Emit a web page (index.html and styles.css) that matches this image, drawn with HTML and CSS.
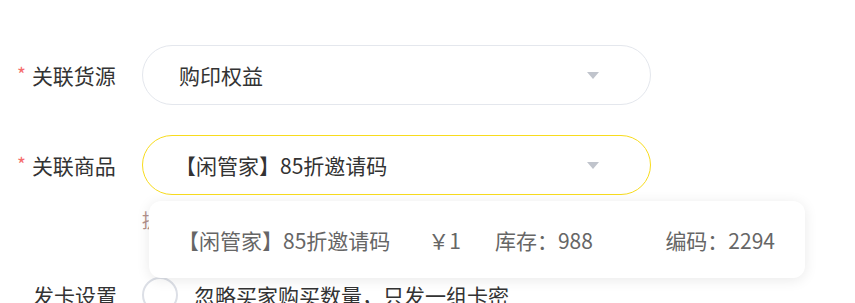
FILE: index.html
```html
<!DOCTYPE html>
<html lang="zh-CN">
<head>
  <meta charset="UTF-8" />
  <meta name="viewport" content="width=device-width, initial-scale=1.0" />
  <title>关联商品</title>
  <link rel="stylesheet" href="styles.css">
</head>
<body>

<!-- ===== Form ===== -->
<div class="form">
  <div class="form-item">
    <label class="label"><span class="req">*</span>关联货源</label>
    <div class="content">
      <div class="select">
        <span class="select-text">购印权益</span>
        <span class="arrow"></span>
      </div>
    </div>
  </div>

  <div class="form-item">
    <label class="label"><span class="req">*</span>关联商品</label>
    <div class="content">
      <div class="select active">
        <span class="select-text">【闲管家】85折邀请码</span>
        <span class="arrow"></span>
      </div>
      <div class="hint">提示：请选择需要关联的商品</div>

      <!-- dropdown -->
      <div class="dropdown">
        <div class="option">
          <span class="opt-name">【闲管家】85折邀请码</span>
          <span class="opt-price">￥1</span>
          <span class="opt-stock">库存：988</span>
          <span class="opt-code">编码：2294</span>
        </div>
      </div>
    </div>
  </div>

  <div class="form-item last">
    <label class="label">发卡设置</label>
    <div class="content">
      <label class="radio"><span class="radio-dot"></span>忽略买家购买数量，只发一组卡密</label>
    </div>
  </div>
</div>

</body>
</html>
```

FILE: styles.css
```css
* { box-sizing:border-box; margin:0; padding:0; }
body{
  background:#fff;color:#333;
  font-family:"Noto Sans CJK SC","Noto Sans",sans-serif;font-size:21px;
  overflow:hidden;
}

.form{padding:45px 0 0 17px;}
.form-item{display:flex;align-items:flex-start;margin-bottom:30px;}
.form-item.last{margin-bottom:0;align-items:center;}

.label{
  width:125px;flex:none;height:60px;display:flex;align-items:center;
  color:#333;white-space:nowrap;
}
.last .label{height:36px;padding-left:16px;}
.req{color:#f56c6c;font-size:19px;margin-right:6px;position:relative;top:-2px;}

.content{position:relative;width:509px;}

.select{
  height:60px;border:1px solid #e4e7ed;border-radius:30px;
  display:flex;align-items:center;justify-content:space-between;
  padding:0 51px 0 36px;background:#fff;
}
.select.active{border-color:#f8dc1e;}
.select-text{color:#333;}
.active .select-text{margin-left:-4px;}
.arrow{
  width:0;height:0;border-left:6px solid transparent;border-right:6px solid transparent;
  border-top:7px solid #c0c4cc;
}

.hint{
  color:#b3918b;font-size:19px;line-height:30px;margin-top:10px;margin-bottom:12px;
  white-space:nowrap;
}

.dropdown{
  position:absolute;top:66px;left:7px;width:656px;height:77px;
  background:#fff;border-radius:12px;
  box-shadow:0 2px 14px rgba(0,0,0,.09);
  display:flex;align-items:center;padding:0 30px 0 29px;z-index:10;
}
.option{display:flex;align-items:center;width:100%;color:#666;white-space:nowrap;font-size:21px;}
.opt-price{margin-left:38px;}
.opt-stock{margin-left:34px;}
.opt-code{margin-left:auto;}

.radio{display:flex;align-items:center;color:#333;white-space:nowrap;}
.radio-dot{
  width:36px;height:36px;border:2px solid #dcdfe6;border-radius:50%;
  margin-right:16px;flex:none;
}
```
